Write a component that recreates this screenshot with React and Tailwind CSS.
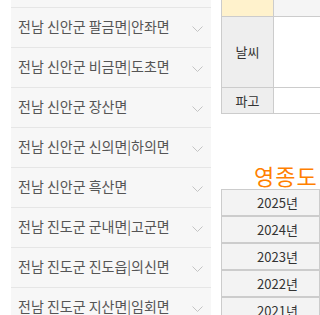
import React from "react";

const regions = [
  "전남 신안군 팔금면|안좌면",
  "전남 신안군 비금면|도초면",
  "전남 신안군 장산면",
  "전남 신안군 신의면|하의면",
  "전남 신안군 흑산면",
  "전남 진도군 군내면|고군면",
  "전남 진도군 진도읍|의신면",
  "전남 진도군 지산면|임회면",
];

const years = ["2025년", "2024년", "2023년", "2022년", "2021년"];

const Chevron = () => (
  <svg width="11" height="6" viewBox="0 0 11 6" className="shrink-0">
    <path d="M0.5 0.5 L5.5 5.5 L10.5 0.5" fill="none" stroke="#c4c4c4" strokeWidth="1" />
  </svg>
);

const App = () => {
  return (
    <div
      className="w-[320px] h-[315px] overflow-hidden bg-white flex"
      style={{ fontFamily: '"Noto Sans CJK KR", "Noto Sans", sans-serif' }}
    >
      {/* 지역 목록 */}
      <div className="ml-[11px] w-[200px] shrink-0 bg-[#f7f7f7] self-start">
        <div className="h-[7px]" />
        {regions.map((name, i) => (
          <div
            key={i}
            className="h-[40px] flex items-center justify-between pl-[7px] pr-[8px] border-t border-[#e6e6e6]"
          >
            <span className="text-[14px] text-[#555] whitespace-nowrap -mt-[3px]">{name}</span>
            <span className="mt-[3px]">
              <Chevron />
            </span>
          </div>
        ))}
      </div>

      {/* 오른쪽 */}
      <div className="ml-[10px] flex-1 overflow-hidden">
        <div className="border-l border-[#cccccc] text-[13px] text-[#333]">
          <div className="flex h-[17px] border-b border-[#cccccc]">
            <div className="w-[52px] shrink-0 bg-[#fff2cc] border-r border-[#cccccc]" />
            <div className="flex-1 bg-[#f5f5f5]" />
          </div>
          <div className="flex h-[71px] border-b border-[#cccccc]">
            <div className="w-[52px] shrink-0 bg-[#eeeeee] border-r border-[#cccccc] flex items-center justify-center">
              날씨
            </div>
            <div className="flex-1 bg-white" />
          </div>
          <div className="flex h-[26px] border-b border-[#cccccc]">
            <div className="w-[52px] shrink-0 bg-[#eeeeee] border-r border-[#cccccc] flex items-center justify-center">
              파고
            </div>
            <div className="flex-1 bg-white" />
          </div>
        </div>

        <div className="mt-[50px] pl-[33px] text-[22px] leading-[22px] tracking-[1px] text-[#ff8000] whitespace-nowrap">
          영종도 물때표
        </div>

        <div className="mt-[3px] text-[13px] text-[#333]">
          {years.map((y) => (
            <div key={y} className="h-[27px] flex border border-[#cccccc] bg-[#f3f3f3]">
              <div className="w-[111px] shrink-0 flex items-center justify-center">{y}</div>
            </div>
          ))}
        </div>
      </div>
    </div>
  );
};

export default App;
